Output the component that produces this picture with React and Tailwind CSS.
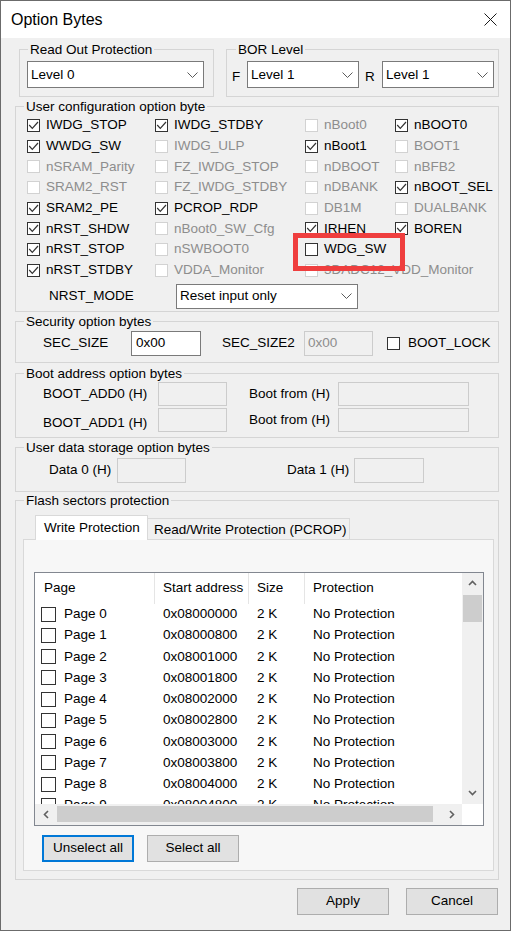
import React from 'react';

function Chev({ className }) {
  return (
    <svg viewBox="0 0 11 6" className={className} fill="none" stroke="#5a5a5a" strokeWidth="1">
      <path d="M0.5 0.5 L5.5 5.5 L10.5 0.5" />
    </svg>
  );
}

function Combo({ className, text }) {
  return (
    <div className={`flex items-center justify-between border border-[#7a7a7a] bg-white ${className}`}>
      <span className="pl-[3px]">{text}</span>
      <Chev className="mr-[5px] h-[6px] w-[11px]" />
    </div>
  );
}

function Box({ checked, disabled, big }) {
  return (
    <span
      className={`flex shrink-0 items-center justify-center border bg-white ${
        disabled ? 'border-[#d2d2d2]' : 'border-[#333333]'
      } ${big ? 'h-[15px] w-[15px]' : 'h-[13px] w-[13px]'}`}
    >
      {checked && (
        <svg viewBox="0 0 11 11" className="h-[11px] w-[11px]" fill="none" stroke="#333333" strokeWidth="1.2">
          <path d="M1.2 5 L4.3 8.4 L10 2" />
        </svg>
      )}
    </span>
  );
}

function Check({ label, checked, disabled }) {
  return (
    <div className="flex items-center gap-[6px] whitespace-nowrap">
      <Box checked={checked} disabled={disabled} />
      <span className={disabled ? 'text-[#8d8d8d]' : 'text-black'}>{label}</span>
    </div>
  );
}

const grid = [
  [['IWDG_STOP', 1, 0], ['IWDG_STDBY', 1, 0], ['nBoot0', 0, 1], ['nBOOT0', 1, 0]],
  [['WWDG_SW', 1, 0], ['IWDG_ULP', 0, 1], ['nBoot1', 1, 0], ['BOOT1', 0, 1]],
  [['nSRAM_Parity', 0, 1], ['FZ_IWDG_STOP', 0, 1], ['nDBOOT', 0, 1], ['nBFB2', 0, 1]],
  [['SRAM2_RST', 0, 1], ['FZ_IWDG_STDBY', 0, 1], ['nDBANK', 0, 1], ['nBOOT_SEL', 1, 0]],
  [['SRAM2_PE', 1, 0], ['PCROP_RDP', 1, 0], ['DB1M', 0, 1], ['DUALBANK', 0, 1]],
  [['nRST_SHDW', 1, 0], ['nBoot0_SW_Cfg', 0, 1], ['IRHEN', 1, 0], ['BOREN', 1, 0]],
  [['nRST_STOP', 1, 0], ['nSWBOOT0', 0, 1], ['WDG_SW', 0, 0], null],
  [['nRST_STDBY', 1, 0], ['VDDA_Monitor', 0, 1], ['3DADC12_VDD_Monitor', 0, 1], null],
];

const colW = ['w-[128px]', 'w-[150px]', 'w-[90px]', 'flex-1'];

function Cell({ c }) {
  if (!c) return null;
  return <Check label={c[0]} checked={!!c[1]} disabled={!!c[2]} />;
}

function Field({ className, text, disabled }) {
  return (
    <div
      className={`flex items-center border ${
        disabled ? 'border-[#cccccc] bg-[#f0f0f0] text-[#8d8d8d] pl-[3px]' : 'border-[#7a7a7a] bg-white pl-[4px]'
      } ${className}`}
    >
      {text}
    </div>
  );
}

function Btn({ children, className }) {
  return (
    <div className={`flex h-[27px] w-[92px] items-center justify-center bg-[#e1e1e1] ${className}`}>{children}</div>
  );
}

function Legend({ children, className }) {
  return <legend className={`px-[2px] leading-[17px] ${className || 'ml-[8px]'}`}>{children}</legend>;
}

const pages = Array.from({ length: 12 }, (_, i) => ({
  name: `Page ${i}`,
  addr: '0x' + (0x08000000 + i * 0x800).toString(16).toUpperCase().padStart(8, '0'),
}));

export default function App() {
  return (
    <div className="relative h-[931px] w-[511px] overflow-hidden border border-[#6b6b6b] bg-[#f0f0f0] font-['Liberation_Sans',Arial,sans-serif] text-[13.5px] leading-[16px] text-black">
      {/* Title bar */}
      <div className="flex h-[37px] items-center justify-between bg-white pl-[10px] pr-[13px]">
        <span className="text-[16px] leading-[20px]">Option Bytes</span>
        <svg viewBox="0 0 13 13" className="h-[13px] w-[13px]" fill="none" stroke="#1a1a1a" strokeWidth="1">
          <path d="M0.5 0.5 L12.5 12.5 M12.5 0.5 L0.5 12.5" />
        </svg>
      </div>

      {/* Row 1 */}
      <div className="ml-[18px] mt-[3px] flex gap-[12px]">
        <fieldset className="w-[195px] border border-[#d5d5d5] pb-[8px]">
          <Legend>Read Out Protection</Legend>
          <Combo className="ml-[7px] mt-[3px] h-[27px] w-[177px]" text="Level 0" />
        </fieldset>
        <fieldset className="w-[273px] border border-[#d5d5d5] pb-[8px]">
          <Legend className="ml-[9px]">BOR Level</Legend>
          <div className="mt-[3px] flex h-[27px] items-center pl-[5px]">
            <span className="w-[15px] pt-[4px]">F</span>
            <Combo className="h-[27px] w-[112px]" text="Level 1" />
            <span className="ml-[6px] w-[17px] pt-[4px]">R</span>
            <Combo className="h-[27px] w-[112px]" text="Level 1" />
          </div>
        </fieldset>
      </div>

      {/* User configuration */}
      <fieldset className="ml-[14px] mt-[1px] w-[484px] border border-[#d5d5d5] pb-[2px]">
        <Legend>User configuration option byte</Legend>
        <div className="flex flex-col pl-[11px]">
          {grid.map((row, r) => (
            <div key={r} className="flex h-[20.7px] items-center">
              {row.map((c, i) => (
                <div key={i} className={colW[i]}>
                  <Cell c={c} />
                </div>
              ))}
            </div>
          ))}
        </div>
        <div className="mt-[3px] flex h-[25px] items-center pl-[33px]">
          <span className="w-[127px]">NRST_MODE</span>
          <Combo className="h-[25px] w-[182px]" text="Reset input only" />
        </div>
      </fieldset>

      {/* Security */}
      <fieldset className="ml-[14px] mt-[1px] w-[484px] border border-[#d5d5d5] pb-[6px]">
        <Legend>Security option bytes</Legend>
        <div className="mt-[1px] flex h-[25px] items-center pl-[27px]">
          <span className="w-[88px]">SEC_SIZE</span>
          <Field className="h-[25px] w-[70px]" text="0x00" />
          <span className="ml-[21px] w-[82px]">SEC_SIZE2</span>
          <Field className="h-[25px] w-[69px]" text="0x00" disabled />
          <div className="ml-[14px] flex items-center gap-[8px]">
            <Box />
            <span>BOOT_LOCK</span>
          </div>
        </div>
      </fieldset>

      {/* Boot address */}
      <fieldset className="ml-[14px] mt-[2px] w-[484px] border border-[#d5d5d5] pb-[5px]">
        <Legend>Boot address option bytes</Legend>
        <div className="flex h-[24px] items-center pl-[27px]">
          <span className="w-[115px]">BOOT_ADD0 (H)</span>
          <Field className="h-[24px] w-[69px]" disabled />
          <span className="ml-[22px] w-[89px]">Boot from (H)</span>
          <Field className="h-[24px] w-[131px]" disabled />
        </div>
        <div className="mt-[2px] flex h-[24px] items-center pl-[27px]">
          <span className="w-[115px] pt-[6px]">BOOT_ADD1 (H)</span>
          <Field className="h-[24px] w-[69px]" disabled />
          <span className="ml-[22px] w-[89px]">Boot from (H)</span>
          <Field className="h-[24px] w-[131px]" disabled />
        </div>
      </fieldset>

      {/* User data */}
      <fieldset className="ml-[14px] mt-[1px] w-[484px] border border-[#d5d5d5] pb-[8px]">
        <Legend>User data storage option bytes</Legend>
        <div className="mt-[2px] flex h-[25px] items-center pl-[33px]">
          <span className="w-[68px]">Data 0 (H)</span>
          <Field className="h-[25px] w-[69px]" disabled />
          <span className="ml-[101px] w-[67px]">Data 1 (H)</span>
          <Field className="h-[25px] w-[70px]" disabled />
        </div>
      </fieldset>

      {/* Flash sectors protection */}
      <fieldset className="ml-[14px] w-[484px] border border-[#d5d5d5] pb-[8px]">
        <Legend>Flash sectors protection</Legend>
        <div className="ml-[19px] mt-[6px] flex items-end">
          <div className="relative z-10 -mb-[1px] flex h-[25px] w-[113px] items-center border border-b-0 border-[#d9d9d9] bg-white pl-[8px]">
            Write Protection
          </div>
          <div className="-ml-[1px] flex h-[21px] w-[203px] items-center border border-b-0 border-[#d9d9d9] bg-[#f0f0f0] pl-[6px] pt-[2px]">
            Read/Write Protection (PCROP)
          </div>
        </div>
        <div className="ml-[7px] w-[471px] border border-[#d9d9d9] bg-[#f7f7f7] pb-[8px]">
          {/* List view */}
          <div className="ml-[10px] mt-[32px] flex h-[254px] w-[450px] flex-col border border-[#828790] bg-white">
            <div className="flex h-[231px]">
              <div className="flex-1 overflow-hidden">
                <div className="flex h-[31px] items-center">
                  <div className="flex h-full w-[120px] items-center border-r border-[#e5e5e5] pl-[9px]">Page</div>
                  <div className="flex h-full w-[94px] items-center border-r border-[#e5e5e5] pl-[8px]">Start address</div>
                  <div className="flex h-full w-[56px] items-center border-r border-[#e5e5e5] pl-[8px]">Size</div>
                  <div className="flex h-full flex-1 items-center pl-[8px]">Protection</div>
                </div>
                {pages.map((p) => (
                  <div key={p.name} className="flex h-[21.25px] items-center whitespace-nowrap">
                    <div className="flex w-[120px] items-center gap-[8px] pl-[6px]">
                      <Box big />
                      <span>{p.name}</span>
                    </div>
                    <div className="w-[94px] pl-[8px]">{p.addr}</div>
                    <div className="w-[56px] pl-[8px]">2 K</div>
                    <div className="flex-1 pl-[8px]">No Protection</div>
                  </div>
                ))}
              </div>
              {/* vertical scrollbar */}
              <div className="flex w-[21px] flex-col bg-[#f0f0f0]">
                <div className="flex h-[21px] items-center justify-center">
                  <svg viewBox="0 0 9 6" className="h-[6px] w-[9px]" fill="none" stroke="#606060" strokeWidth="1.6">
                    <path d="M1 5 L4.5 1.5 L8 5" />
                  </svg>
                </div>
                <div className="mx-[1px] mt-[1px] h-[27px] bg-[#cdcdcd]" />
                <div className="flex-1" />
                <div className="flex h-[21px] items-center justify-center">
                  <svg viewBox="0 0 9 6" className="h-[6px] w-[9px]" fill="none" stroke="#606060" strokeWidth="1.6">
                    <path d="M1 1 L4.5 4.5 L8 1" />
                  </svg>
                </div>
              </div>
            </div>
            {/* horizontal scrollbar */}
            <div className="flex h-[21px]">
              <div className="flex flex-1 items-center bg-[#f0f0f0]">
                <div className="flex h-full w-[21px] items-center justify-center">
                  <svg viewBox="0 0 6 9" className="h-[9px] w-[6px]" fill="none" stroke="#606060" strokeWidth="1.6">
                    <path d="M5 1 L1.5 4.5 L5 8" />
                  </svg>
                </div>
                <div className="ml-[1px] h-[16px] w-[376px] bg-[#cdcdcd]" />
                <div className="flex-1" />
                <div className="flex h-full w-[21px] items-center justify-center">
                  <svg viewBox="0 0 6 9" className="h-[9px] w-[6px]" fill="none" stroke="#606060" strokeWidth="1.6">
                    <path d="M1 1 L4.5 4.5 L1 8" />
                  </svg>
                </div>
              </div>
              <div className="w-[21px] bg-white" />
            </div>
          </div>
          {/* buttons */}
          <div className="ml-[18px] mt-[9px] flex gap-[13px]">
            <Btn className="border-2 border-[#0078d7]">Unselect all</Btn>
            <Btn className="border border-[#adadad]">Select all</Btn>
          </div>
        </div>
      </fieldset>

      {/* Bottom buttons */}
      <div className="mr-[12px] mt-[8px] flex justify-end gap-[17px]">
        <Btn className="border border-[#adadad]">Apply</Btn>
        <Btn className="border border-[#adadad]">Cancel</Btn>
      </div>

      {/* Red annotation */}
      <div className="absolute left-[292px] top-[232px] h-[38px] w-[112px] border-[5px] border-[#ef3e3e]" />
    </div>
  );
}
